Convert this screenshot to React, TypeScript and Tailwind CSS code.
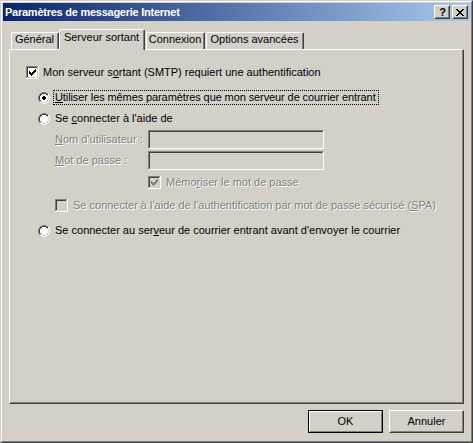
import React from "react";

const FACE = "#d4d0c8";

function Pixels({ grid }: { grid: (string | null)[][] }) {
  const h = grid.length;
  const w = grid[0].length;
  return (
    <svg width={w} height={h} viewBox={`0 0 ${w} ${h}`} shapeRendering="crispEdges" className="block shrink-0">
      {grid.map((row, y) =>
        row.map((c, x) => (c ? <rect key={`${x}-${y}`} x={x} y={y} width="1" height="1" fill={c} /> : null))
      )}
    </svg>
  );
}

const CHECK = ["......#", ".....##", "#...###", "##.###.", "#####..", ".###...", "..#...."];

function Checkbox({ checked = false, disabled = false }: { checked?: boolean; disabled?: boolean }) {
  const grid: string[][] = [];
  for (let y = 0; y < 13; y++) {
    const row: string[] = [];
    for (let x = 0; x < 13; x++) {
      let c: string;
      if (x === 12 || y === 12) c = "#ffffff";
      else if (x === 0 || y === 0) c = "#808080";
      else if (x === 11 || y === 11) c = FACE;
      else if (x === 1 || y === 1) c = "#404040";
      else c = disabled ? FACE : "#ffffff";
      if (checked && x >= 3 && x <= 9 && y >= 3 && y <= 9 && CHECK[y - 3][x - 3] === "#")
        c = disabled ? "#808080" : "#000000";
      row.push(c);
    }
    grid.push(row);
  }
  return <Pixels grid={grid} />;
}

const RADIO = [
  "....GGGG....",
  "..GGDDDDGG..",
  ".GDDWWWWDDH.",
  ".GDWWWWWWLH.",
  "GDWWWWWWWWLH",
  "GDWWWWWWWWLH",
  "GDWWWWWWWWLH",
  "GDWWWWWWWWLH",
  ".GDWWWWWWLH.",
  ".GLLWWWWLLH.",
  "..HHLLLLHH..",
  "....HHHH....",
];
const DOT = [".KK.", "KKKK", "KKKK", ".KK."];
const RADIO_COLORS: Record<string, string> = { G: "#808080", D: "#404040", W: "#ffffff", H: "#ffffff", L: FACE, K: "#000000" };

function Radio({ checked = false }: { checked?: boolean }) {
  const grid = RADIO.map((r, y) =>
    r.split("").map((ch, x) => {
      if (checked && x >= 4 && x <= 7 && y >= 4 && y <= 7 && DOT[y - 4][x - 4] === "K") return "#000000";
      return RADIO_COLORS[ch] ?? null;
    })
  );
  return <Pixels grid={grid} />;
}

const CLOSE = ["KK....KK", ".KK..KK.", "..KKKK..", "...KK...", "..KKKK..", ".KK..KK.", "KK....KK"];

function CaptionBtn({ children }: { children: React.ReactNode }) {
  return (
    <div className="w-[16px] h-[14px] bg-[#d4d0c8] border border-t-white border-l-white border-r-[#404040] border-b-[#404040]">
      <div className="w-full h-full border border-t-[#d4d0c8] border-l-[#d4d0c8] border-r-[#808080] border-b-[#808080] flex items-center justify-center">
        {children}
      </div>
    </div>
  );
}

function Off({ children }: { children: React.ReactNode }) {
  return <span className="text-[#808080] [text-shadow:1px_1px_0_#ffffff]">{children}</span>;
}

function Field() {
  return (
    <div className="w-[176px] h-[19px] border border-t-[#808080] border-l-[#808080] border-r-white border-b-white">
      <div className="w-full h-full bg-[#d4d0c8] border border-t-[#404040] border-l-[#404040] border-r-[#d4d0c8] border-b-[#d4d0c8]" />
    </div>
  );
}

export default function App() {
  return (
    <div className="w-[473px] h-[443px] bg-[#d4d0c8] text-black text-[11px] leading-[13px] font-['Liberation_Sans',Arial,sans-serif] overflow-hidden select-none">
      <div className="h-full border border-t-[#d4d0c8] border-l-[#d4d0c8] border-r-[#404040] border-b-[#404040]">
        <div className="h-full p-px flex flex-col border border-t-white border-l-white border-r-[#808080] border-b-[#808080]">
          {/* caption */}
          <div className="h-[18px] shrink-0 flex items-center px-[2px] bg-[linear-gradient(to_right,#0a246a,#a6caf0)]">
            <span className="flex-1 font-bold text-white tracking-[-0.25px]">Paramètres de messagerie Internet</span>
            <CaptionBtn>
              <span className="font-bold text-[11px] leading-[10px] pl-px">?</span>
            </CaptionBtn>
            <div className="ml-[2px]">
              <CaptionBtn>
                <Pixels grid={CLOSE.map((r) => r.split("").map((c) => (c === "K" ? "#000000" : null)))} />
              </CaptionBtn>
            </div>
          </div>

          {/* tabs */}
          <div className="mt-[8px] mx-[6px] flex flex-col">
            <div className="h-[20px] pl-[2px] flex items-end">
              <div className="w-[48px] h-[17px] rounded-t-[2px] border-l border-t border-r border-l-white border-t-white border-r-[#404040]">
                <div className="h-full text-center border-r border-r-[#808080]">Général</div>
              </div>
              <div className="relative z-10 -mb-px w-[86px] h-[21px] bg-[#d4d0c8] rounded-t-[2px] border-l border-t border-r border-l-white border-t-white border-r-[#404040]">
                <div className="h-full pt-px text-center border-r border-r-[#808080]">Serveur sortant</div>
              </div>
              <div className="ml-px w-[59px] h-[17px] rounded-t-[2px] border-l border-t border-r border-l-white border-t-white border-r-[#404040]">
                <div className="h-full text-center border-r border-r-[#808080]">Connexion</div>
              </div>
              <div className="ml-px w-[98px] h-[17px] rounded-t-[2px] border-l border-t border-r border-l-white border-t-white border-r-[#404040]">
                <div className="h-full text-center border-r border-r-[#808080]">Options avancées</div>
              </div>
            </div>

            {/* panel */}
            <div className="h-[355px] border border-t-white border-l-white border-r-[#404040] border-b-[#404040]">
              <div className="h-full flex flex-col border-r border-b border-r-[#808080] border-b-[#808080]">
                <div className="mt-[16px] pl-[16px] h-[13px] flex items-center gap-[4px]">
                  <Checkbox checked />
                  <span>
                    Mon serveur s<u>o</u>rtant (SMTP) requiert une authentification
                  </span>
                </div>

                <div className="mt-[10px] pl-[28px] h-[17px] flex items-center gap-[3px]">
                  <Radio checked />
                  <span className="border border-dotted border-black pl-px pr-[2px] leading-[13px] tracking-[-0.1px]">
                    <u>U</u>tiliser les mêmes paramètres que mon serveur de courrier entrant
                  </span>
                </div>

                <div className="mt-[4px] pl-[28px] h-[17px] flex items-center gap-[3px]">
                  <Radio />
                  <span className="border border-transparent pl-px">
                    Se <u>c</u>onnecter à l'aide de
                  </span>
                </div>

                <div className="mt-[3px] pl-[45px] h-[19px] flex items-center">
                  <div className="w-[93px]">
                    <Off>
                      <u>N</u>om d'utilisateur :
                    </Off>
                  </div>
                  <Field />
                </div>

                <div className="mt-[2px] pl-[45px] h-[19px] flex items-center">
                  <div className="w-[93px]">
                    <Off>
                      <u>M</u>ot de passe :
                    </Off>
                  </div>
                  <Field />
                </div>

                <div className="mt-[6px] pl-[138px] h-[13px] flex items-center gap-[5px]">
                  <Checkbox checked disabled />
                  <Off>
                    Mémo<u>r</u>iser le mot de passe
                  </Off>
                </div>

                <div className="mt-[10px] pl-[45px] h-[13px] flex items-center gap-[5px]">
                  <Checkbox disabled />
                  <Off>
                    Se connecter à l'aide de l'authentification par mot de passe sécurisé (<u>S</u>PA)
                  </Off>
                </div>

                <div className="mt-[10px] pl-[28px] h-[17px] flex items-center gap-[3px]">
                  <Radio />
                  <span className="border border-transparent pl-px">
                    Se connecter au ser<u>v</u>eur de courrier entrant avant d'envoyer le courrier
                  </span>
                </div>
              </div>
            </div>
          </div>

          {/* buttons */}
          <div className="mt-[6px] pr-[6px] flex justify-end gap-[6px]">
            <button className="w-[75px] h-[23px] border border-black bg-[#d4d0c8]">
              <div className="w-full h-full flex items-center justify-center border border-t-white border-l-white border-r-[#808080] border-b-[#808080]">
                OK
              </div>
            </button>
            <button className="w-[75px] h-[23px] bg-[#d4d0c8] border border-t-white border-l-white border-r-[#404040] border-b-[#404040]">
              <div className="w-full h-full flex items-center justify-center border border-t-[#d4d0c8] border-l-[#d4d0c8] border-r-[#808080] border-b-[#808080]">
                Annuler
              </div>
            </button>
          </div>
        </div>
      </div>
    </div>
  );
}
